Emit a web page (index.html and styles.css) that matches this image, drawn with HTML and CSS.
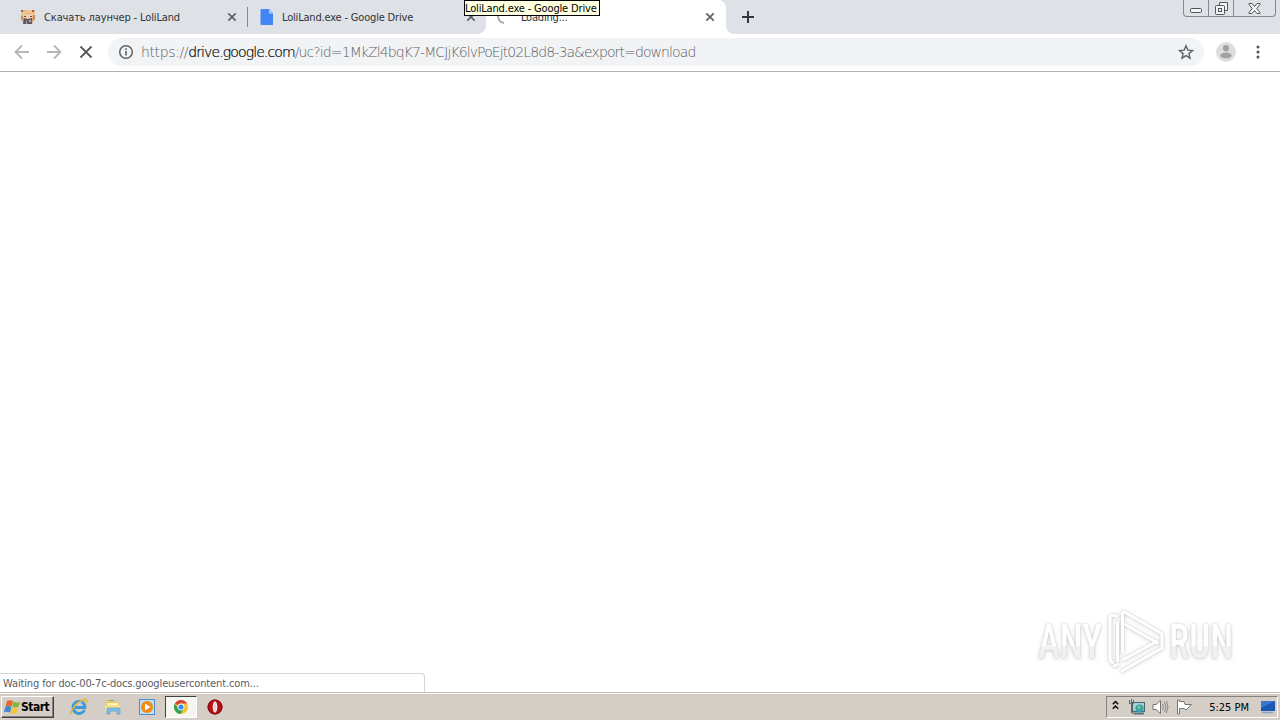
FILE: index.html
```html
<!DOCTYPE html>
<html lang="en">
<head>
  <meta charset="UTF-8">
  <title>Loading...</title>
  <link rel="stylesheet" href="styles.css">
</head>
<body>

  <!-- Tab strip -->
  <header class="tabs">
    <div class="tab tab-first">
      <svg class="favicon" width="16" height="16" viewBox="0 0 16 16">
        <path d="M1 1h14l-1 9-2 5H4L1 10z" fill="#d9a778"/>
        <path d="M1 1l3 1 4-1 6 0 1 4-3 2-2-3-5 1-2 4-2-3z" fill="#efc48d"/>
        <path d="M3 7l3-2 5 0 2 2-2 3H4z" fill="#f3cdb0"/>
        <path d="M1 7h2v4H1zM13 6h2v5h-2z" fill="#c98e5e"/>
        <path d="M4 7h2v1H4zM10 7h2v1h-2z" fill="#7a4b3c"/>
        <path d="M4 9l4 1 4-1v6H3z" fill="#5d5a62"/>
        <path d="M1 1h2v2H1zM12 1h2v2h-2z" fill="#a3654d"/>
        <path d="M6 12h1v3H6zM9 11h2v2H9z" fill="#b9aaa8"/>
      </svg>
      <span class="title title-ru">Скачать лаунчер - LoliLand</span>
      <svg class="close" width="10" height="10" viewBox="0 0 10 10"><path d="M1.3 1.3l7.4 7.4M8.7 1.3L1.3 8.7"/></svg>
    </div>
    <div class="tab tab-second">
      <svg class="favicon" width="14" height="16" viewBox="0 0 14 16">
        <path d="M1.5 0H9l4 4.5V16H1.5Q.5 16 .5 15V1Q.5 0 1.5 0z" fill="#4285f4"/>
        <path d="M9 0l4 4.5H9z" fill="#a9c7fa"/>
      </svg>
      <span class="title title-drive">LoliLand.exe - Google Drive</span>
      <svg class="close" width="10" height="10" viewBox="0 0 10 10"><path d="M1.3 1.3l7.4 7.4M8.7 1.3L1.3 8.7"/></svg>
    </div>
    <div class="tab tab-active">
      <svg class="favicon" width="16" height="16" viewBox="0 0 16 16">
        <path d="M8 14A6.500 6.500 0 0 1 4 3" fill="none" stroke="#a2a4a8" stroke-width="1.8"/>
      </svg>
      <span class="title title-loading">Loading...</span>
      <svg class="close" width="10" height="10" viewBox="0 0 10 10"><path d="M1.3 1.3l7.4 7.4M8.7 1.3L1.3 8.7"/></svg>
    </div>
    <svg class="new-tab" width="12" height="12" viewBox="0 0 12 12"><path d="M6 0v12M0 6h12"/></svg>
    <div class="window-buttons">
      <span class="min"><svg width="12" height="5" viewBox="0 0 12 5"><rect x=".5" y=".5" width="11" height="4" rx="1"/></svg></span>
      <span class="max"><svg width="13" height="13" viewBox="0 0 13 13"><path d="M4.5 3V.5h8v8H10"/><rect x=".5" y="3.5" width="9" height="9" rx="1"/><rect x="3.5" y="6.500" width="3" height="3"/></svg></span>
      <span class="exit"><svg width="13" height="11" viewBox="0 0 13 11"><path d="M1 .5h3l2.500 3 2.500-3h3v1L8.700 5.500 12 9.500v1H9l-2.500-3-2.500 3H1v-1l3.300-4L1 1.500z"/></svg></span>
    </div>
    <div class="tooltip"><span>LoliLand.exe - Google Drive</span></div>
  </header>

  <!-- Toolbar -->
  <div class="toolbar">
    <svg class="nav-icon" width="16" height="16" viewBox="0 0 16 16"><path d="M15 8H2M8 1.500L1.500 8 8 14.500"/></svg>
    <svg class="nav-icon" width="16" height="16" viewBox="0 0 16 16"><path d="M1 8h13M8 1.500L14.500 8 8 14.500"/></svg>
    <svg class="nav-icon stop" width="16" height="16" viewBox="0 0 16 16"><path d="M2.500 2.500l11 11M13.500 2.500l-11 11"/></svg>
    <div class="omnibox">
      <svg class="info" width="16" height="16" viewBox="0 0 16 16">
        <circle cx="8" cy="8" r="6.300" fill="none" stroke="#5f6368" stroke-width="1.500"/>
        <path d="M8 7v4.500M8 4.300v1.600" stroke="#5f6368" stroke-width="1.600"/>
      </svg>
      <span class="url"><span class="scheme">https://</span><b>drive.google.com</b>/uc?id=1MkZl4bqK7-MCJjK6lvPoEjt02L8d8-3a&amp;export=download</span>
      <svg class="star" width="16" height="16" viewBox="0 0 16 16">
        <path d="M8 1.800l1.800 4.300 4.700.4-3.600 3.100 1.100 4.600-4-2.500-4 2.500 1.100-4.600L1.500 6.500l4.700-.4z" fill="none" stroke="#5f6368" stroke-width="1.400"/>
      </svg>
    </div>
    <svg class="avatar" width="20" height="20" viewBox="0 0 20 20">
      <circle cx="10" cy="10" r="10" fill="#dededf"/>
      <circle cx="10" cy="6.200" r="3.100" fill="#a0a2a5"/>
      <ellipse cx="10" cy="13.500" rx="5.700" ry="3" fill="#a0a2a5"/>
    </svg>
    <svg class="menu" width="4" height="14" viewBox="0 0 4 14">
      <circle cx="2" cy="2" r="1.500"/><circle cx="2" cy="7" r="1.500"/><circle cx="2" cy="12" r="1.500"/>
    </svg>
  </div>

  <!-- Page area -->
  <main class="page">
    <svg class="watermark" width="210" height="70" viewBox="0 0 210 70">
      <defs>
        <linearGradient id="fade" x1="0" y1="0" x2="0" y2="1">
          <stop offset=".57" stop-color="#fff"/>
          <stop offset=".59" stop-color="#f1f1f1"/>
        </linearGradient>
      </defs>
      <g class="mark-text">
        <text x="8" y="53" textLength="64" lengthAdjust="spacingAndGlyphs">ANY</text>
        <text x="139" y="53" textLength="64" lengthAdjust="spacingAndGlyphs">RUN</text>
      </g>
      <g class="mark-logo">
        <path d="M88 11.500l-4-1q-4-1-4 3v40q0 4 4 4"/>
        <path d="M87.500 57V17M92.500 48V9q0-3 3-1.500l37 21.500M92.500 18l36 20.500M92.500 55l35-19M83 61.500l6-3M91 66.500L132 43V29"/>
      </g>
    </svg>
    <div class="status"><span>Waiting for doc-00-7c-docs.googleusercontent.com...</span></div>
  </main>

  <!-- Taskbar -->
  <footer class="taskbar">
    <div class="start">
      <svg width="17" height="16" viewBox="0 0 17 16">
        <path d="M3 2q3-1.500 6 .3L7.700 7.500Q5 6 1.600 7.200z" fill="#e9642b"/>
        <path d="M9.500 2.700q3 1.500 6.500 0l-1.500 5q-3 1.500-6.300 0z" fill="#80b83e"/>
        <path d="M1.400 7.700q3-1.300 6 .3L6 13.500q-3-1.500-6-.3z" fill="#3f86d6"/>
        <path d="M8 8.500q3 1.500 6.300 0L13 14q-3 1.500-6.500 0z" fill="#f7c331"/>
      </svg>
      <span>Start</span>
    </div>
    <div class="launch">
      <svg width="18" height="18" viewBox="0 0 18 18">
        <path d="M14.500 12a6 6 0 1 1 .2-4.500l.1 2H5" fill="none" stroke="#3b9bdc" stroke-width="3"/>
        <path d="M5 7q3-4 7-2" fill="none" stroke="#a5dcf7" stroke-width="1"/>
        <path d="M2 15Q-1 17 3 10.500 8 3 15 1.300q3 0 1.200 3.700" fill="none" stroke="#e5b62e" stroke-width="1.400"/>
      </svg>
      <svg width="18" height="18" viewBox="0 0 18 18">
        <path d="M2 4l1-2h5l1 2h6v9H2z" fill="#e9ca68"/>
        <path d="M3 5h11v5H3z" fill="#fff3b7"/>
        <path d="M5 2h5v1H5z" fill="#72b66d"/>
        <path d="M1 7h15v6H1z" fill="#f4df8b"/>
        <path d="M3 16v-5q0-1 1-1h11q1 0 1 1v5h-3v-3H6v3z" fill="#78bfe6" stroke="#4a9ac9" stroke-width=".6"/>
      </svg>
      <svg width="18" height="18" viewBox="0 0 18 18">
        <rect x="1.500" y="1.500" width="15" height="15" fill="#c4dff4" stroke="#4c91cb"/>
        <circle cx="9" cy="9" r="6" fill="#f18a16"/>
        <path d="M7 5.500L12.500 9 7 12.500z" fill="#fff"/>
      </svg>
      <div class="running">
        <svg width="16" height="16" viewBox="0 0 16 16">
          <circle cx="8" cy="8" r="7" fill="#f4c52c"/>
          <path d="M8 8L1.900 4.500A7 7 0 0 1 14.100 4.500H8z" fill="#dc4438"/>
          <path d="M1.900 4.500A7 7 0 0 0 7.500 15L11 9.500 8 8 5 9.500z" fill="#2da457"/>
          <circle cx="8" cy="8" r="3.400" fill="#fff"/>
          <circle cx="8" cy="8" r="2.600" fill="#4285f4"/>
        </svg>
      </div>
      <svg class="opera" width="16" height="16" viewBox="0 0 16 16">
        <circle cx="8" cy="8" r="7.500" fill="#b70f17"/>
        <circle cx="8" cy="8" r="7" fill="none" stroke="#7d0a0f"/>
        <ellipse cx="8" cy="8" rx="2.300" ry="5.800" fill="#f5eeee"/>
        <ellipse cx="8" cy="8" rx=".5" ry="4.800" fill="#d9b5b3"/>
      </svg>
    </div>
    <div class="tray">
      <svg class="chevrons" width="7" height="10" viewBox="0 0 7 10"><path d="M.8 4.200l2.700-2.700 2.700 2.700M.8 8.700L3.500 6l2.700 2.700"/></svg>
      <svg class="network" width="18" height="16" viewBox="0 0 18 16">
        <rect x="4.500" y="3.500" width="12" height="9" fill="#a9cfd8" stroke="#47666e"/>
        <path d="M6 14.500h10" stroke="#54777c" stroke-width="2"/>
        <circle cx="11.500" cy="9.500" r="4" fill="#379eae"/>
        <path d="M9 8q2-3 4 0l-2 3z" fill="#7fca75"/>
        <path d="M1.500 1v3.500h4V1M3.500 0v4M3.500 5v9h3" fill="none" stroke="#5f6262"/>
      </svg>
      <svg class="sound" width="17" height="16" viewBox="0 0 17 16">
        <path d="M1 5.500h3L8.500 1.500v13L4 10.500H1z" fill="#fff" stroke="#747474"/>
        <path d="M10.500 5q2 3 0 6M12.500 3q3 5 0 10M14.500 2q3 6 0 12" fill="none" stroke="#8b8985"/>
      </svg>
      <svg class="flag" width="17" height="16" viewBox="0 0 17 16">
        <path d="M1.500 1v14h2V9.500h5l1.500 1.500 5.500-5.500H9L8 2.500H3.500V1z" fill="#fff" stroke="#777"/>
      </svg>
      <span class="clock">5:25 PM</span>
      <svg class="desktop" width="16" height="14" viewBox="0 0 16 14">
        <path d="M1 1h14v10H1z" fill="#1c58b4"/><path d="M1 1h14L1 8z" fill="#3977ca"/>
        <path d="M2 12.500h11" stroke="#8fa3bc" stroke-width="1.500"/>
      </svg>
    </div>
  </footer>

</body>
</html>
```
FILE: styles.css
```css
* {
  box-sizing: border-box;
}

body {
  margin: 0;
  width: 1280px;
  height: 720px;
  overflow: hidden;
  display: flex;
  flex-direction: column;
  background: #fff;
  font-family: "DejaVu Sans Condensed", "DejaVu Sans", sans-serif;
  font-stretch: condensed;
  font-size: 11px;
  color: #303337;
}

svg {
  display: block;
  flex: none;
}

/* Tab strip */
.tabs {
  position: relative;
  height: 34px;
  display: flex;
  background: #dee1e6;
}

.tab {
  height: 34px;
  display: flex;
  align-items: center;
  white-space: nowrap;
}

.tab .close {
  margin-left: auto;
  fill: none;
  stroke: #5f6368;
  stroke-width: 1.7;
}

.tab-first {
  width: 248px;
  padding: 0 11px 0 20px;
  gap: 8px;
  background: linear-gradient(#85888c, #85888c) right center / 1px 20px no-repeat;
}

.tab-second {
  width: 238px;
  padding: 0 10px 0 12px;
  gap: 8px;
}

.tab-active {
  position: relative;
  width: 240px;
  padding: 0 11px 0 10px;
  gap: 9px;
  background: #fff;
  border-radius: 8px 8px 0 0;
}

/* Flared feet of the active tab */
.tab-active::before,
.tab-active::after {
  content: "";
  position: absolute;
  bottom: 0;
  width: 8px;
  height: 8px;
}

.tab-active::before {
  left: -8px;
  background: radial-gradient(circle at 0 0, transparent 7.5px, #fff 8px);
}

.tab-active::after {
  right: -8px;
  background: radial-gradient(circle at 100% 0, transparent 7.5px, #fff 8px);
}

.title-ru {
  letter-spacing: -0.13px;
}

.title-drive {
  letter-spacing: -0.18px;
}

.title-loading {
  letter-spacing: -0.2px;
}

.new-tab {
  margin: 11px 0 0 16px;
  stroke: #35383c;
  stroke-width: 2;
}

.window-buttons {
  width: 93px;
  height: 17px;
  margin: 0 4px 0 auto;
  display: flex;
  border: 1px solid #85888f;
  border-top: none;
  border-radius: 0 0 4px 4px;
}

.window-buttons span {
  display: flex;
  justify-content: center;
  align-items: center;
  border-right: 1px solid #85888f;
}

.window-buttons svg {
  fill: #f2f3f5;
  stroke: #50545b;
}

.window-buttons .min {
  width: 25px;
  padding-top: 5px;
}

.window-buttons .max {
  width: 25px;
}

.window-buttons .exit {
  flex: 1;
  border-right: none;
}

/* Tooltip of the hovered tab */
.tooltip {
  position: absolute;
  left: 464px;
  top: 0;
  width: 136px;
  height: 16px;
  line-height: 15px;
  border: 1px solid #000;
  background: #ffffe1;
  color: #000;
  white-space: nowrap;
  letter-spacing: -0.16px;
}

/* Toolbar */
.toolbar {
  height: 38px;
  display: flex;
  align-items: center;
  padding: 0 20px 2px 14px;
  border-bottom: 1px solid #b2b2b2;
}

.nav-icon {
  margin-right: 16px;
  fill: none;
  stroke: #b4b6b8;
  stroke-width: 1.8;
}

.stop {
  margin-right: 14px;
  stroke: #55585d;
}

.omnibox {
  width: 1096px;
  height: 28px;
  display: flex;
  align-items: center;
  padding: 0 10px;
  border-radius: 14px;
  background: #f1f3f4;
}

.url {
  margin-left: 7px;
  font-family: "DejaVu Sans Light", "DejaVu Sans", sans-serif;
  font-weight: 200;
  font-stretch: normal;
  font-size: 14px;
  letter-spacing: -0.9px;
  color: #5c6166;
  white-space: nowrap;
}

.url .scheme {
  letter-spacing: -0.38px;
}

.url b {
  font-weight: 200;
  letter-spacing: -0.88px;
  color: #000;
  -webkit-text-stroke: 0.2px #000;
}

.star {
  margin-left: auto;
}

.avatar {
  margin-left: 12px;
}

.menu {
  margin-left: auto;
  fill: #505459;
}

/* Page area */
.page {
  position: relative;
  flex: 1;
}

.watermark {
  position: absolute;
  right: 40px;
  bottom: 17px;
  overflow: visible;
  filter: drop-shadow(0 0 1px rgba(0, 0, 0, 0.18)) drop-shadow(0 1px 2px rgba(0, 0, 0, 0.13));
}

.mark-text {
  font-family: Roboto, "Liberation Sans", sans-serif;
  font-size: 49px;
  font-weight: 500;
  fill: url(#fade);
}

.mark-logo {
  fill: none;
  stroke: #fff;
  stroke-width: 3;
}

.status {
  position: absolute;
  left: 0;
  bottom: 0;
  width: 425px;
  height: 19px;
  padding-left: 3px;
  line-height: 19px;
  border: 1px solid #d5d5d5;
  border-left: none;
  border-bottom: none;
  border-radius: 0 4px 0 0;
  background: #fff;
  color: #595c60;
  letter-spacing: -0.13px;
}

/* Taskbar */
.taskbar {
  height: 28px;
  display: flex;
  align-items: center;
  padding: 1px 2px 1px 1px;
  border-top: 1px solid #c6c3be;
  box-shadow: inset 0 1px #fff;
  background: #d5cec6;
  color: #000;
}

.start {
  width: 53px;
  height: 22px;
  display: flex;
  align-items: center;
  padding-left: 2px;
  border: 1px solid;
  border-color: #fff #404040 #404040 #fff;
  box-shadow: inset -1px -1px #858079;
  font-weight: bold;
  font-size: 12px;
  letter-spacing: -0.5px;
}

.launch {
  display: flex;
  align-items: center;
  margin-left: 16px;
  gap: 16px;
}

.running {
  width: 32px;
  height: 22px;
  margin-left: -7px;
  display: flex;
  align-items: center;
  justify-content: center;
  border: 1px solid;
  border-color: #404040 #fff #fff #404040;
  background: #f7f5f2;
}

.opera {
  margin-left: -6px;
}

.tray {
  width: 172px;
  height: 22px;
  margin-left: auto;
  display: flex;
  align-items: center;
  padding: 0 1px 0 5px;
  border: 1px solid;
  border-color: #858079 #fff #fff #858079;
}

.chevrons {
  margin-bottom: 3px;
  fill: none;
  stroke: #000;
  stroke-width: 1.4;
}

.network {
  margin-left: 9px;
}

.sound {
  margin-left: 6px;
}

.flag {
  margin-left: 7px;
}

.clock {
  margin-left: auto;
  padding-top: 1px;
  white-space: nowrap;
}

.desktop {
  margin-left: 11px;
}
```
